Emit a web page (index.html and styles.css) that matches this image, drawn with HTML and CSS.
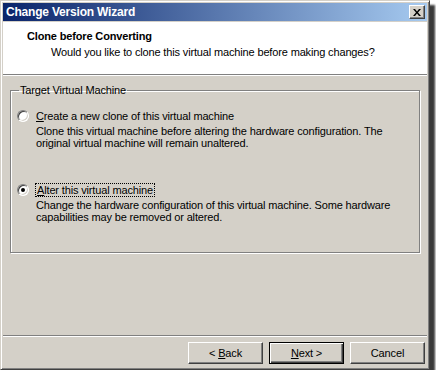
FILE: index.html
```html
<!DOCTYPE html>
<html lang="en">
<head>
  <meta charset="UTF-8">
  <title>Change Version Wizard</title>
  <link rel="stylesheet" href="styles.css">
</head>
<body>
  <div class="window">
    <div class="titlebar">
      <span class="title">Change Version Wizard</span>
      <span class="close">
        <svg width="8" height="7" viewBox="0 0 8 7"><path d="M0 0h2l2 2.5L6 0h2L5 3.5 8 7H6L4 4.5 2 7H0l3-3.5z" fill="#000"/></svg>
      </span>
    </div>

    <div class="header">
      <h1>Clone before Converting</h1>
      <p>Would you like to clone this virtual machine before making changes?</p>
    </div>
    <div class="sep"></div>

    <div class="content">
      <fieldset class="group">
        <legend>Target Virtual Machine</legend>

        <div class="option">
          <span class="radio"></span>
          <div class="option-text">
            <div class="label"><u>C</u>reate a new clone of this virtual machine</div>
            <div class="desc">Clone this virtual machine before altering the hardware configuration. The original virtual machine will remain unaltered.</div>
          </div>
        </div>

        <div class="option second">
          <span class="radio checked"></span>
          <div class="option-text">
            <div class="label"><span class="focus"><u>A</u>lter this virtual machine</span></div>
            <div class="desc">Change the hardware configuration of this virtual machine. Some hardware capabilities may be removed or altered.</div>
          </div>
        </div>
      </fieldset>
    </div>

    <div class="sep"></div>
    <div class="footer">
      <button>&lt; <u>B</u>ack</button>
      <button class="default"><u>N</u>ext &gt;</button>
      <button>Cancel</button>
    </div>
  </div>
</body>
</html>
```

FILE: styles.css
```css
body {
  margin: 0;
  background: #fff;
  font-family: 'Liberation Sans', Arial, sans-serif;
  font-size: 11px;
  letter-spacing: -0.15px;
  color: #000;
}

.window {
  width: 430px;
  height: 370px;
  box-sizing: border-box;
  background: #d4d0c8;
  border: 1px solid;
  border-color: #d4d0c8 #404040 #404040 #d4d0c8;
  box-shadow: inset 1px 1px #fff, inset -1px -1px #808080, 5px 5px 2px #3a3a3a;
  padding: 2px;
  display: flex;
  flex-direction: column;
}

.titlebar {
  height: 18px;
  background: linear-gradient(to right, #0a246a, #a6caf0);
  display: flex;
  align-items: center;
  justify-content: space-between;
  padding: 0 2px 0 2px;
}

.title {
  color: #fff;
  font-weight: bold;
  font-size: 12px;
  letter-spacing: -0.2px;
  padding-left: 1px;
}

.close {
  width: 16px;
  height: 14px;
  box-sizing: border-box;
  background: #d4d0c8;
  border: 1px solid;
  border-color: #fff #404040 #404040 #fff;
  box-shadow: inset -1px -1px #808080;
  display: flex;
  align-items: center;
  justify-content: center;
}

.header {
  height: 52px;
  margin-top: 1px;
  background: #fff;
  padding: 7px 0 0 24px;
  box-sizing: border-box;
}

.header h1 {
  margin: 0;
  font-size: 11px;
  font-weight: bold;
  line-height: 14px;
}

.header p {
  margin: 3px 0 0 24px;
  line-height: 13px;
}

.sep {
  height: 1px;
  background: #808080;
  border-bottom: 1px solid #fff;
}

.content {
  flex: 1;
  padding: 8px 7px 0 7px;
}

.group {
  margin: 0;
  padding: 12px 6px 0 6px;
  height: 169px;
  box-sizing: border-box;
  border: 1px solid #808080;
  box-shadow: inset 1px 1px #fff, 1px 1px #fff;
}

.group legend {
  padding: 0 1px;
  margin-left: 2px;
  line-height: 13px;
}

.option {
  display: flex;
  align-items: flex-start;
  gap: 7px;
}

.option.second {
  margin-top: 34px;
}

.radio {
  width: 12px;
  height: 12px;
  box-sizing: border-box;
  border-radius: 50%;
  background: #fff;
  border: 1px solid;
  border-color: #808080 #fff #fff #808080;
  box-shadow: inset 1px 1px #404040, inset -1px -1px #d4d0c8;
  margin-top: 1px;
  position: relative;
}

.radio.checked::after {
  content: "";
  position: absolute;
  left: 3px;
  top: 3px;
  width: 4px;
  height: 4px;
  border-radius: 50%;
  background: #000;
}

.label {
  line-height: 14px;
}

.focus {
  outline: 1px dotted #000;
  outline-offset: 0;
  padding: 0 1px;
}

.desc {
  margin-top: 2px;
  line-height: 12px;
  width: 370px;
}

.footer {
  display: flex;
  justify-content: flex-end;
  gap: 6px;
  padding: 5px 2px 3px 0;
}

button {
  width: 75px;
  height: 22px;
  font-family: inherit;
  font-size: 11px;
  letter-spacing: inherit;
  background: #d4d0c8;
  color: #000;
  border: 1px solid;
  border-color: #fff #404040 #404040 #fff;
  box-shadow: inset -1px -1px #808080;
  padding: 0;
}

button.default {
  border: 1px solid #000;
  box-shadow: inset 1px 1px #fff, inset -1px -1px #404040, inset -2px -2px #808080;
}
```
